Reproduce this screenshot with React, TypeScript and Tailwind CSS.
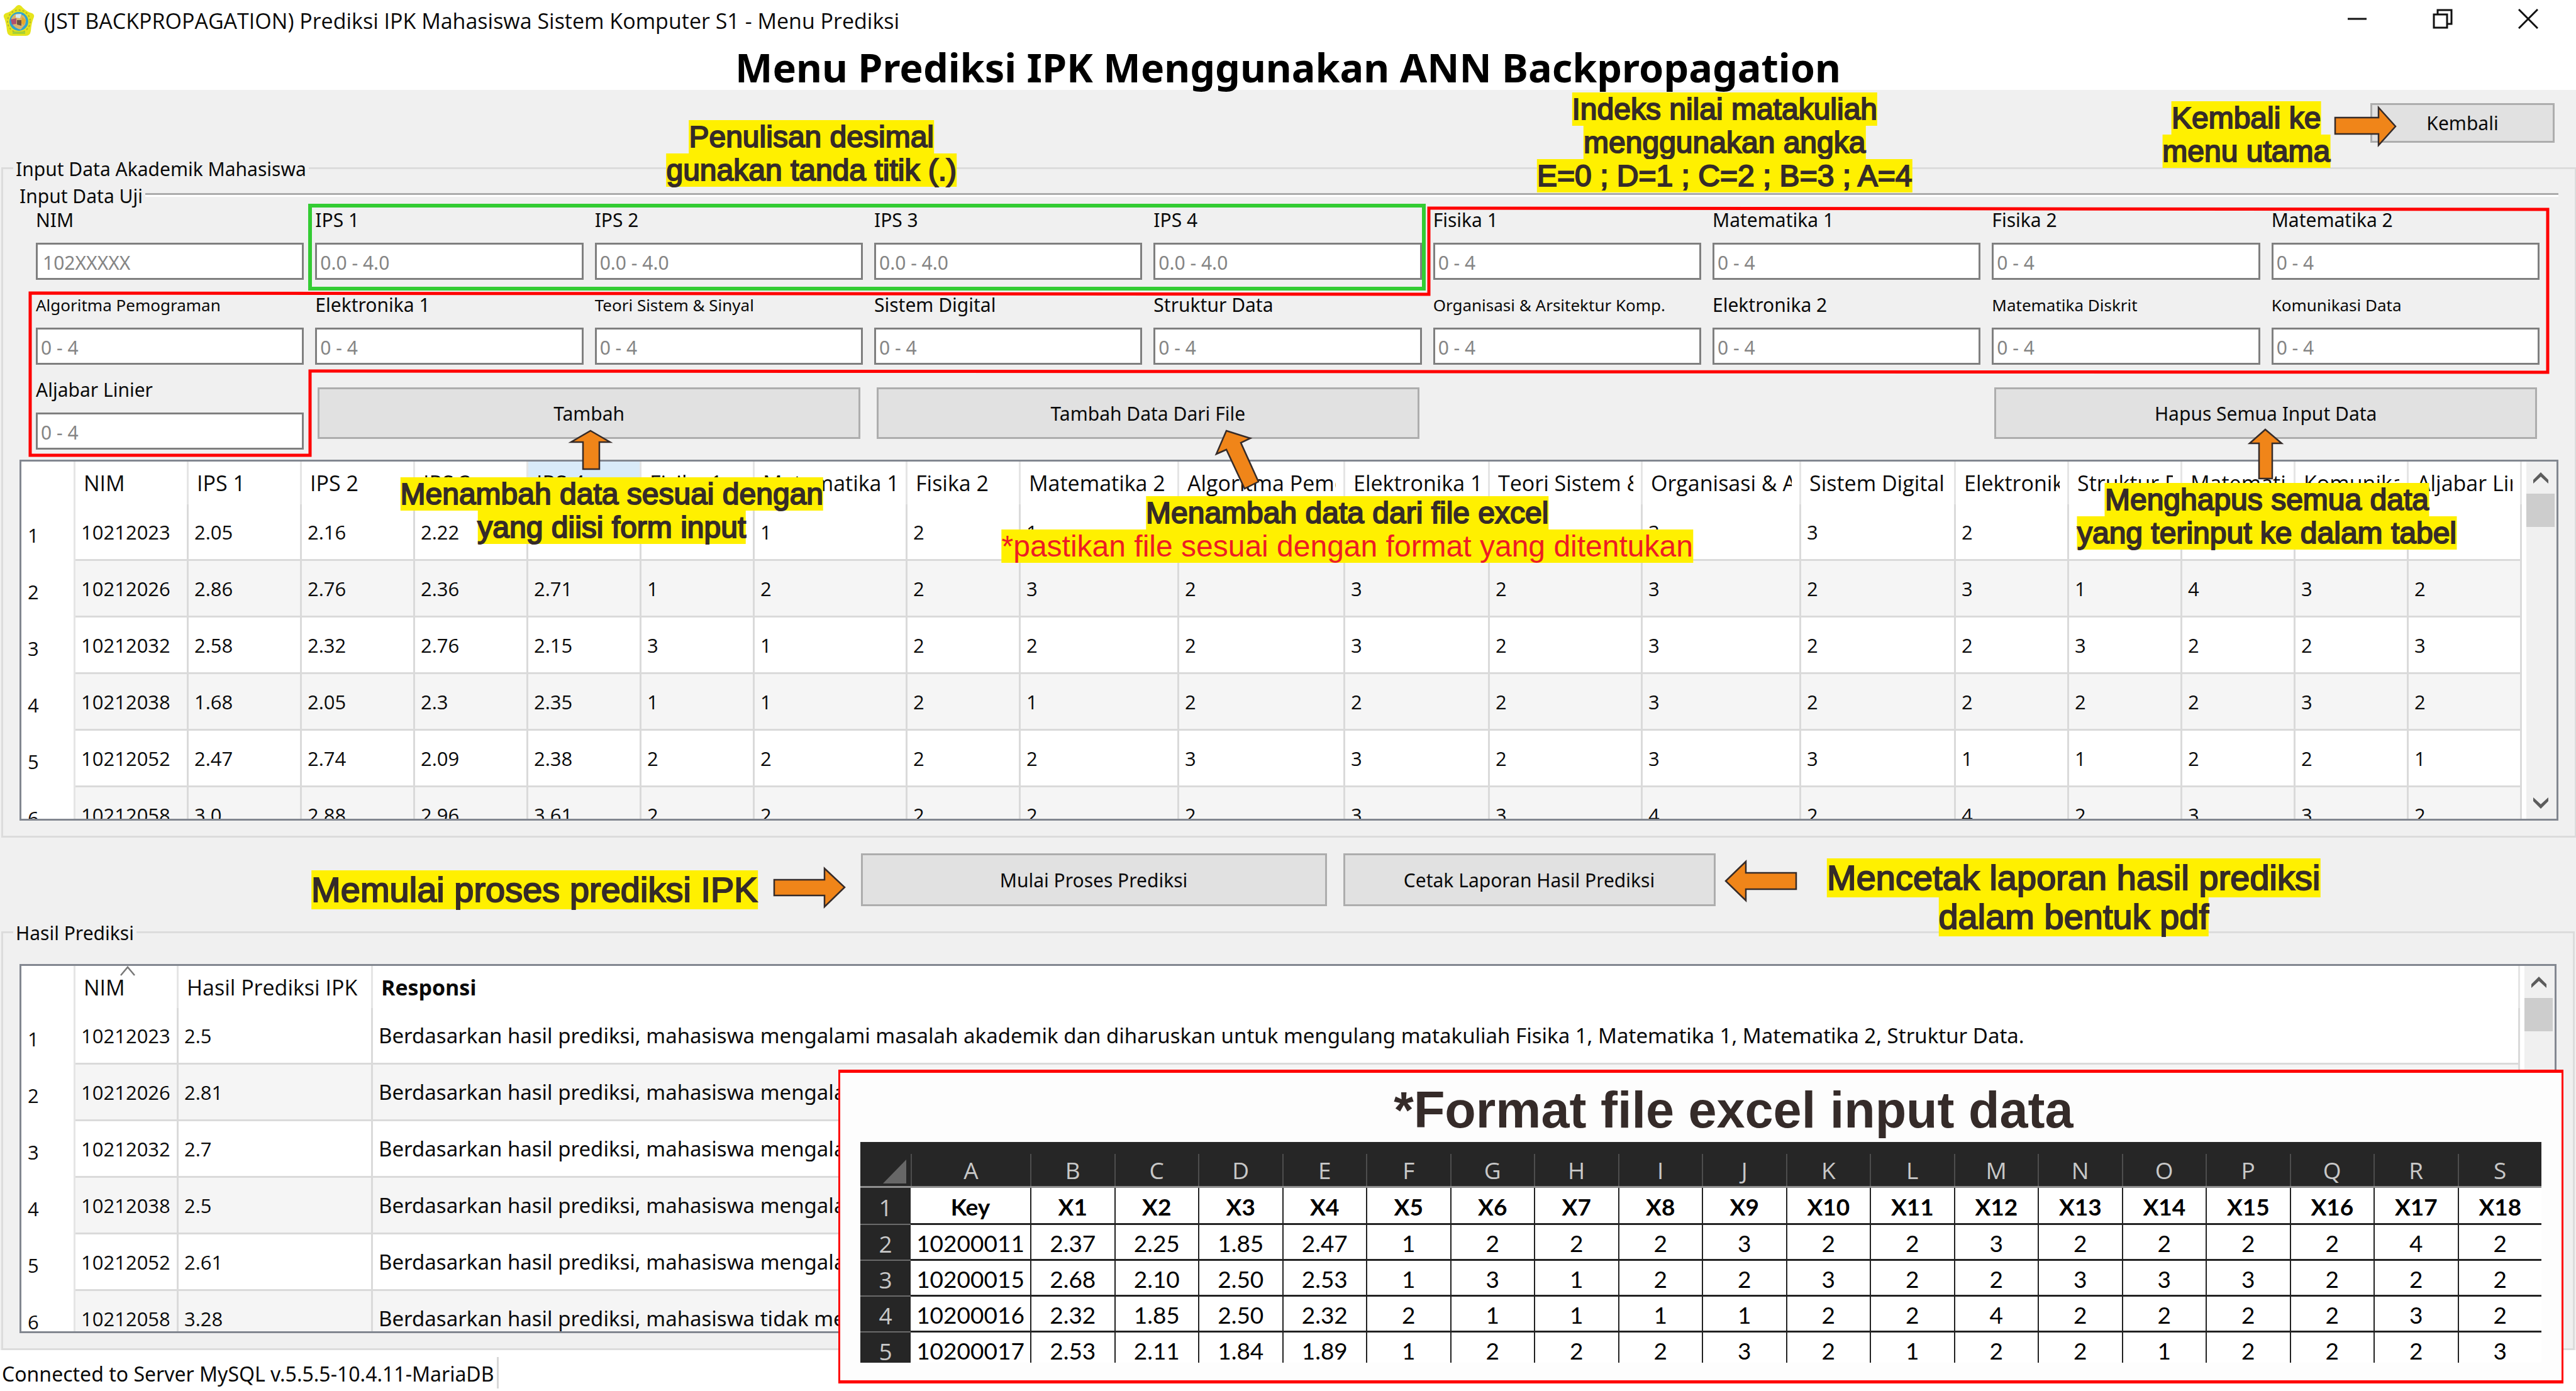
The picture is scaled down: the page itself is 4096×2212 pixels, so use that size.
import { useId, type ReactNode } from "react";

const columns = [
  { name: "NIM", width: 180 },
  { name: "IPS 1", width: 180 },
  { name: "IPS 2", width: 180 },
  { name: "IPS 3", width: 180 },
  { name: "IPS 4", width: 180, active: true },
  { name: "Fisika 1", width: 180 },
  { name: "Matematika 1", width: 243 },
  { name: "Fisika 2", width: 180 },
  { name: "Matematika 2", width: 252 },
  { name: "Algoritma Pemograman", width: 264 },
  { name: "Elektronika 1", width: 230 },
  { name: "Teori Sistem & Sinyal", width: 243 },
  { name: "Organisasi & Arsitektur Komp.", width: 252 },
  { name: "Sistem Digital", width: 246 },
  { name: "Elektronika 2", width: 180 },
  { name: "Struktur Data", width: 180 },
  { name: "Matematika Diskrit", width: 180 },
  { name: "Komunikasi Data", width: 180 },
  { name: "Aljabar Linier", width: 180 },
];

const inputRows = [
  "10212023 2.05 2.16 2.22 2.3 1 1 2 1 2 2 2 3 3 2 1 2 2 2",
  "10212026 2.86 2.76 2.36 2.71 1 2 2 3 2 3 2 3 2 3 1 4 3 2",
  "10212032 2.58 2.32 2.76 2.15 3 1 2 2 2 3 2 3 2 2 3 2 2 3",
  "10212038 1.68 2.05 2.3 2.35 1 1 2 1 2 2 2 3 2 2 2 2 3 2",
  "10212052 2.47 2.74 2.09 2.38 2 2 2 2 3 3 2 3 3 1 1 2 2 1",
  "10212058 3.0 2.88 2.96 3.61 2 2 2 2 2 3 3 4 2 4 2 3 3 2",
].map((row) => row.split(" "));

const trouble = "Berdasarkan hasil prediksi, mahasiswa mengalami masalah akademik";

const results = [
  [
    "10212023",
    "2.5",
    trouble + " dan diharuskan untuk mengulang matakuliah Fisika 1, Matematika 1, Matematika 2, Struktur Data.",
  ],
  ["10212026", "2.81", trouble + "."],
  ["10212032", "2.7", trouble + "."],
  ["10212038", "2.5", trouble + "."],
  ["10212052", "2.61", trouble + "."],
  ["10212058", "3.28", "Berdasarkan hasil prediksi, mahasiswa tidak mengalami masalah akademik."],
];

const sheetLetters = "ABCDEFGHIJKLMNOPQRS".split("");
const sheetRows = [
  "Key X1 X2 X3 X4 X5 X6 X7 X8 X9 X10 X11 X12 X13 X14 X15 X16 X17 X18",
  "10200011 2.37 2.25 1.85 2.47 1 2 2 2 3 2 2 3 2 2 2 2 4 2",
  "10200015 2.68 2.10 2.50 2.53 1 3 1 2 2 3 2 2 3 3 3 2 2 2",
  "10200016 2.32 1.85 2.50 2.32 2 1 1 1 1 2 2 4 2 2 2 2 3 2",
  "10200017 2.53 2.11 1.84 1.89 1 2 2 2 3 2 1 2 2 1 2 2 2 3",
].map((row) => row.split(" "));

const fields: { label: string; hint: string; small?: boolean }[] = [
  { label: "NIM", hint: "102XXXXX" },
  { label: "IPS 1", hint: "0.0 - 4.0" },
  { label: "IPS 2", hint: "0.0 - 4.0" },
  { label: "IPS 3", hint: "0.0 - 4.0" },
  { label: "IPS 4", hint: "0.0 - 4.0" },
  { label: "Fisika 1", hint: "0 - 4" },
  { label: "Matematika 1", hint: "0 - 4" },
  { label: "Fisika 2", hint: "0 - 4" },
  { label: "Matematika 2", hint: "0 - 4" },
  { label: "Algoritma Pemograman", hint: "0 - 4", small: true },
  { label: "Elektronika 1", hint: "0 - 4" },
  { label: "Teori Sistem & Sinyal", hint: "0 - 4", small: true },
  { label: "Sistem Digital", hint: "0 - 4" },
  { label: "Struktur Data", hint: "0 - 4" },
  { label: "Organisasi & Arsitektur Komp.", hint: "0 - 4", small: true },
  { label: "Elektronika 2", hint: "0 - 4" },
  { label: "Matematika Diskrit", hint: "0 - 4", small: true },
  { label: "Komunikasi Data", hint: "0 - 4", small: true },
  { label: "Aljabar Linier", hint: "0 - 4" },
];

function Field({ label, hint, small }: { label: string; hint: string; small?: boolean }) {
  const id = useId();
  return (
    <div className="flex flex-col gap-4">
      <label htmlFor={id} className={`whitespace-nowrap leading-[40px] ${small ? "text-[26px]" : "text-[30px]"}`}>
        {label}
      </label>
      <input
        id={id}
        placeholder={hint}
        className={`h-[59px] w-full border-[3px] border-[#7f7f7f] bg-white pt-1 text-[30px] outline-none placeholder:text-[#858585] ${
          label === "NIM" ? "pl-2" : "pl-[5px]"
        }`}
      />
    </div>
  );
}

function PushButton({ children, className }: { children: ReactNode; className: string }) {
  return (
    <button type="button" className={`border-[3px] border-[#adadad] bg-[#e1e1e1] text-[30px] ${className}`}>
      {children}
    </button>
  );
}

function Chevron({ down }: { down?: boolean }) {
  return (
    <svg viewBox="0 0 24 20" className="h-5 w-6" aria-hidden="true">
      <path
        d={down ? "M0 1 V7 L12 19 L24 7 V1 L12 12 Z" : "M0 19 V13 L12 1 L24 13 V19 L12 8 Z"}
        fill="#5c5c5c"
      />
    </svg>
  );
}

function ScrollBar() {
  return (
    <div className="ml-[7px] flex w-12 shrink-0 flex-col bg-[#f0f0f0]">
      <button type="button" aria-label="Gulir ke atas" className="flex h-[51px] w-[45px] items-center justify-center">
        <Chevron />
      </button>
      <div className="h-[53px] w-[45px] bg-[#cdcdcd]" />
      <button type="button" aria-label="Gulir ke bawah" className="mt-auto flex h-[51px] w-[45px] items-center justify-center">
        <Chevron down />
      </button>
    </div>
  );
}

const headCell = "overflow-hidden whitespace-nowrap border-r-[3px] border-[#e5e5e5] pl-[13px] pr-3 text-left text-[34px]";
const bodyCell = "overflow-hidden whitespace-nowrap border-r-[3px] border-b-[3px] border-[#dadada] pl-[9px]";
const rowHead = "border-r-[3px] border-[#e5e5e5] bg-white pl-2.5 pt-2 text-left font-normal";

function InputTable() {
  return (
    <div className="mx-[26px] mt-4 flex h-[574px] overflow-hidden border-[3px] border-[#828790] bg-white font-['Open_Sans',sans-serif]">
      <div className="min-w-0 flex-1 overflow-hidden">
        <table className="w-full table-fixed border-separate border-spacing-0 text-[31px] leading-[48px]">
          <colgroup>
            <col width={86} />
            {columns.map((c) => (
              <col key={c.name} width={c.width} />
            ))}
          </colgroup>
          <thead>
            <tr className="h-[68px]">
              <th className="border-r-[3px] border-[#e5e5e5]" />
              {columns.map((c) => (
                <th key={c.name} scope="col" className={`font-normal ${headCell} ${c.active ? "bg-[#d9ebf9]" : "bg-white"}`}>
                  <div className="overflow-hidden">{c.name}</div>
                </th>
              ))}
            </tr>
          </thead>
          <tbody>
            {inputRows.map((row, i) => (
              <tr key={row[0]} className={`h-[90px] ${i % 2 ? "bg-[#f5f5f5]" : "bg-white"}`}>
                <th scope="row" className={rowHead}>{i + 1}</th>
                {row.map((value, j) => (
                  <td key={j} className={bodyCell}>{value}</td>
                ))}
              </tr>
            ))}
          </tbody>
        </table>
      </div>
      <ScrollBar />
    </div>
  );
}

function ResultTable() {
  return (
    <div className="mx-[26px] flex h-[587px] overflow-hidden border-[3px] border-[#828790] bg-white font-['Open_Sans',sans-serif]">
      <div className="min-w-0 flex-1 overflow-hidden">
        <table className="w-full table-fixed border-separate border-spacing-0 text-[31px] leading-[48px]">
          <colgroup>
            <col width={86} />
            <col width={164} />
            <col width={309} />
            <col />
          </colgroup>
          <thead>
            <tr className="h-[67px]">
              <th className="border-r-[3px] border-[#e5e5e5]" />
              <th scope="col" className={`relative font-normal ${headCell}`}>
                NIM
                <svg viewBox="0 0 24 16" className="absolute top-0 left-[71px] h-4 w-6" aria-hidden="true">
                  <path d="M1 15 L12 2 L23 15" fill="none" stroke="#777" strokeWidth="2.5" />
                </svg>
              </th>
              <th scope="col" className={`font-normal ${headCell}`}>Hasil Prediksi IPK</th>
              <th scope="col" className={`font-bold ${headCell}`}>Responsi</th>
            </tr>
          </thead>
          <tbody>
            {results.map(([nim, ipk, text], i) => (
              <tr key={nim} className={`h-[90px] ${i % 2 ? "bg-[#f5f5f5]" : "bg-white"}`}>
                <th scope="row" className={rowHead}>{i + 1}</th>
                <td className={bodyCell}>{nim}</td>
                <td className={bodyCell}>{ipk}</td>
                <td className={`font-['Noto_Sans',sans-serif] text-[33px] ${bodyCell}`}>{text}</td>
              </tr>
            ))}
          </tbody>
        </table>
      </div>
      <ScrollBar />
    </div>
  );
}

function SheetExample() {
  return (
    <section className="absolute top-[1701px] right-5 left-[1333px] border-x-[3px] border-y-[5px] border-[#ff0000] bg-[#fdfdfd] px-8 pb-7">
      <h2 className="pt-2 pl-[104px] text-center font-['Liberation_Sans',sans-serif] text-[81px] leading-[102px] font-bold text-[#352b29]">
        *Format file excel input data
      </h2>
      <div className="h-[351px] overflow-hidden bg-white">
        <table className="w-full table-fixed border-separate border-spacing-0 text-center font-['Lato',sans-serif] text-[37px] leading-[48px]">
          <colgroup>
            <col width={80} />
            <col width={190} />
            {sheetLetters.slice(1).map((l) => (
              <col key={l} />
            ))}
          </colgroup>
          <thead className="font-['Open_Sans',sans-serif] text-[#c8c8c8]">
            <tr className="h-[73px] bg-[#262626]">
              <th className="border-b-[3px] border-[#8f8f8f] p-0">
                <svg viewBox="0 0 80 70" className="h-[70px] w-20" aria-hidden="true">
                  <path d="M73 28 V66 H36 Z" fill="#676767" />
                </svg>
              </th>
              {sheetLetters.map((l) => (
                <th key={l} scope="col" className="border-b-[3px] border-[#8f8f8f] p-0 pt-[19px] font-normal">
                  <div className="flex h-[51px] items-center justify-center border-l-2 border-[#4d4d4d]">{l}</div>
                </th>
              ))}
            </tr>
          </thead>
          <tbody>
            {sheetRows.map((row, i) => (
              <tr key={i} className={i === 0 ? "h-[59px] font-bold" : "h-[57px]"}>
                <th scope="row" className="border-b-2 border-[#6a6a6a] bg-[#262626] pt-1 font-['Open_Sans',sans-serif] font-normal text-[#c8c8c8]">
                  {i + 1}
                </th>
                {row.map((value, j) => (
                  <td key={j} className={`border-b-[3px] border-[#222] pt-1 text-black ${j ? "border-l-2" : ""}`}>{value}</td>
                ))}
              </tr>
            ))}
          </tbody>
        </table>
      </div>
    </section>
  );
}

function Note({ lines, className }: { lines: ReactNode[]; className: string }) {
  return (
    <div
      className={`absolute flex -translate-x-1/2 flex-col items-center whitespace-nowrap font-['Liberation_Sans',sans-serif] text-[#352b29] [-webkit-text-stroke:2px_#352b29] ${className}`}
    >
      {lines.map((line, i) => (
        <span key={i} className="bg-[#fff000]">{line}</span>
      ))}
    </div>
  );
}

function Marks() {
  return (
    <svg
      viewBox="0 0 4096 2212"
      preserveAspectRatio="none"
      className="pointer-events-none absolute inset-0 h-full w-full"
      aria-hidden="true"
    >
      <rect x="493" y="327" width="1771" height="132" fill="none" stroke="#33cc33" strokeWidth="6" />
      <path d="M2272 331 L4051 333 V592 L493 590 V724 H48 V466 L2272 468 Z" fill="none" stroke="#ff0000" strokeWidth="5" />
      <g fill="#f08519" stroke="#352b29" strokeWidth="2.5">
        <path d="M3713 187 H3782 V171 L3809 201 L3782 231 V213 H3713 Z" />
        <path d="M939 685 L970 703 H953 V746 H927 V703 H908 Z" />
        <path d="M1950 685 L1988 697 L1973 704 L2001 766 L1979 777 L1950 715 L1934 722 Z" />
        <path d="M3602 683 L3628 705 H3613 V761 H3592 V705 H3577 Z" />
        <path d="M1231 1399 H1311 V1381 L1343 1411 L1311 1442 V1424 H1231 Z" />
        <path d="M2744 1401 L2776 1370 V1388 H2856 V1414 H2776 V1432 Z" />
      </g>
    </svg>
  );
}

function Logo() {
  return (
    <svg viewBox="0 0 50 52" className="h-[52px] w-[50px]" aria-hidden="true">
      <path d="M25 1 Q28 1 31 5 Q38 12 46 14 Q50 16 49 20 Q45 29 44 42 Q43 50 36 50 H14 Q7 50 6 42 Q5 29 1 20 Q0 16 4 14 Q12 12 19 5 Q22 1 25 1 Z" fill="#e6e41c" />
      <circle cx="25" cy="27" r="18" fill="none" stroke="#b3b42a" strokeWidth="2" strokeDasharray="3 3" />
      <circle cx="25" cy="27" r="15" fill="#2fa3cf" />
      <path d="M13 22 Q18 13 26 15 L33 18 Q38 24 35 32 L28 40 Q18 38 14 30 Z" fill="#d9b46a" />
      <path d="M12 24 L21 22 V31 L14 32 Z" fill="#b0506e" />
      <path d="M20 16 L29 15 L27 22 L20 21 Z" fill="#d6e6ee" />
      <path d="M22 25 H29 V34 L22 32 Z" fill="#6b5445" />
      <path d="M30 20 L36 25 L33 33 L29 30 Z" fill="#e8a727" />
      <path d="M15 45 H35" stroke="#a9d034" strokeWidth="4" />
    </svg>
  );
}

export default function App() {
  return (
    <div className="relative flex min-h-screen flex-col overflow-hidden bg-[#f0f0f0] font-['Noto_Sans',sans-serif] text-[30px] text-[#0a0a0a]">
      <header className="bg-white">
        <div className="flex h-[66px] items-center pl-[5px]">
          <Logo />
          <span className="ml-[15px] flex-1 font-['Open_Sans',sans-serif] text-[34px]">
            (JST BACKPROPAGATION) Prediksi IPK Mahasiswa Sistem Komputer S1 - Menu Prediksi
          </span>
          <button type="button" aria-label="Kecilkan" className="flex h-[60px] w-[136px] items-center justify-center self-start">
            <svg viewBox="0 0 30 30" className="size-[30px]"><path d="M0 15 H30" stroke="#111" strokeWidth="3" /></svg>
          </button>
          <button type="button" aria-label="Pulihkan" className="flex h-[60px] w-[136px] items-center justify-center self-start">
            <svg viewBox="0 0 32 32" className="size-8" fill="none" stroke="#111" strokeWidth="3">
              <path d="M2 9 H23 V30 H2 Z M8 9 V2 H30 V24 H23" />
            </svg>
          </button>
          <button type="button" aria-label="Tutup" className="mr-2 flex h-[60px] w-[136px] items-center justify-center self-start">
            <svg viewBox="0 0 32 32" className="size-8" stroke="#111" strokeWidth="3"><path d="M1 1 L31 31 M31 1 L1 31" /></svg>
          </button>
        </div>
        <h1 className="pt-1 text-center text-[63px] leading-[73px] font-bold text-black">
          Menu Prediksi IPK Menggunakan ANN Backpropagation
        </h1>
      </header>

      <div className="flex justify-end pt-[21px] pr-[34px] pb-5">
        <PushButton className="h-[63px] w-[293px]">Kembali</PushButton>
      </div>

      <fieldset className="mx-0.5 border-[3px] border-[#dcdcdc] pt-[3px] pb-6">
        <legend className="ml-4 px-1 pt-1 leading-[36px]">Input Data Akademik Mahasiswa</legend>
        <fieldset className="mx-[26px] border-t-[6px] border-white [border-top-style:groove]">
          <legend className="pt-1 pr-1 leading-[36px]">Input Data Uji</legend>
          <div className="grid grid-cols-9 gap-x-[18px] gap-y-5 pr-[30px] pl-[26px]">
            {fields.map((f) => (
              <Field key={f.label} {...f} />
            ))}
            <PushButton className="col-span-2 mx-1 mt-4 h-[82px]">Tambah</PushButton>
            <PushButton className="col-span-2 mx-1 mt-4 h-[82px]">Tambah Data Dari File</PushButton>
            <PushButton className="col-span-2 col-start-8 mx-1 mt-4 h-[82px]">Hapus Semua Input Data</PushButton>
          </div>
        </fieldset>
        <InputTable />
      </fieldset>

      <div className="flex justify-center gap-[26px] pt-[25px] pb-[21px]">
        <PushButton className="h-[84px] w-[741px]">Mulai Proses Prediksi</PushButton>
        <PushButton className="h-[84px] w-[592px]">Cetak Laporan Hasil Prediksi</PushButton>
      </div>

      <fieldset className="mx-0.5 border-[3px] border-[#dcdcdc] pt-[31px] pb-6">
        <legend className="ml-4 px-1 pt-1 leading-[36px]">Hasil Prediksi</legend>
        <ResultTable />
      </fieldset>

      <footer className="flex flex-1 bg-white pt-[11px] pl-[3px]">
        <span className="h-[50px] border-r-[3px] border-[#d7d7d7] pr-1 text-[32px] leading-[54px]">
          Connected to Server MySQL v.5.5.5-10.4.11-MariaDB
        </span>
      </footer>

      <Note className="top-[191px] left-[31.5%] text-[48px] leading-[53px]" lines={["Penulisan desimal", "gunakan tanda titik (.)"]} />
      <Note
        className="top-[147px] left-[66.95%] text-[48px] leading-[53px]"
        lines={["Indeks nilai matakuliah", "menggunakan angka", "E=0 ; D=1 ; C=2 ; B=3 ; A=4"]}
      />
      <Note className="top-[161px] left-[87.2%] text-[48px] leading-[53px]" lines={["Kembali ke", "menu utama"]} />
      <Note className="top-[759px] left-[23.75%] text-[48px] leading-[53px]" lines={["Menambah data sesuai dengan", "yang diisi form input"]} />
      <Note
        className="top-[789px] left-[52.3%] text-[48px] leading-[53px]"
        lines={[
          "Menambah data dari file excel",
          <span key="w" className="text-[#ed1c24] [-webkit-text-stroke:0]">*pastikan file sesuai dengan format yang ditentukan</span>,
        ]}
      />
      <Note className="top-[768px] left-[88%] text-[48px] leading-[53px]" lines={["Menghapus semua data", "yang terinput ke dalam tabel"]} />
      <Note className="top-[1384px] left-[20.75%] text-[56px] leading-[62px]" lines={["Memulai proses prediksi IPK"]} />
      <Note className="top-[1365px] left-[80.5%] text-[56px] leading-[62px]" lines={["Mencetak laporan hasil prediksi", "dalam bentuk pdf"]} />
      <Marks />
      <SheetExample />
    </div>
  );
}
